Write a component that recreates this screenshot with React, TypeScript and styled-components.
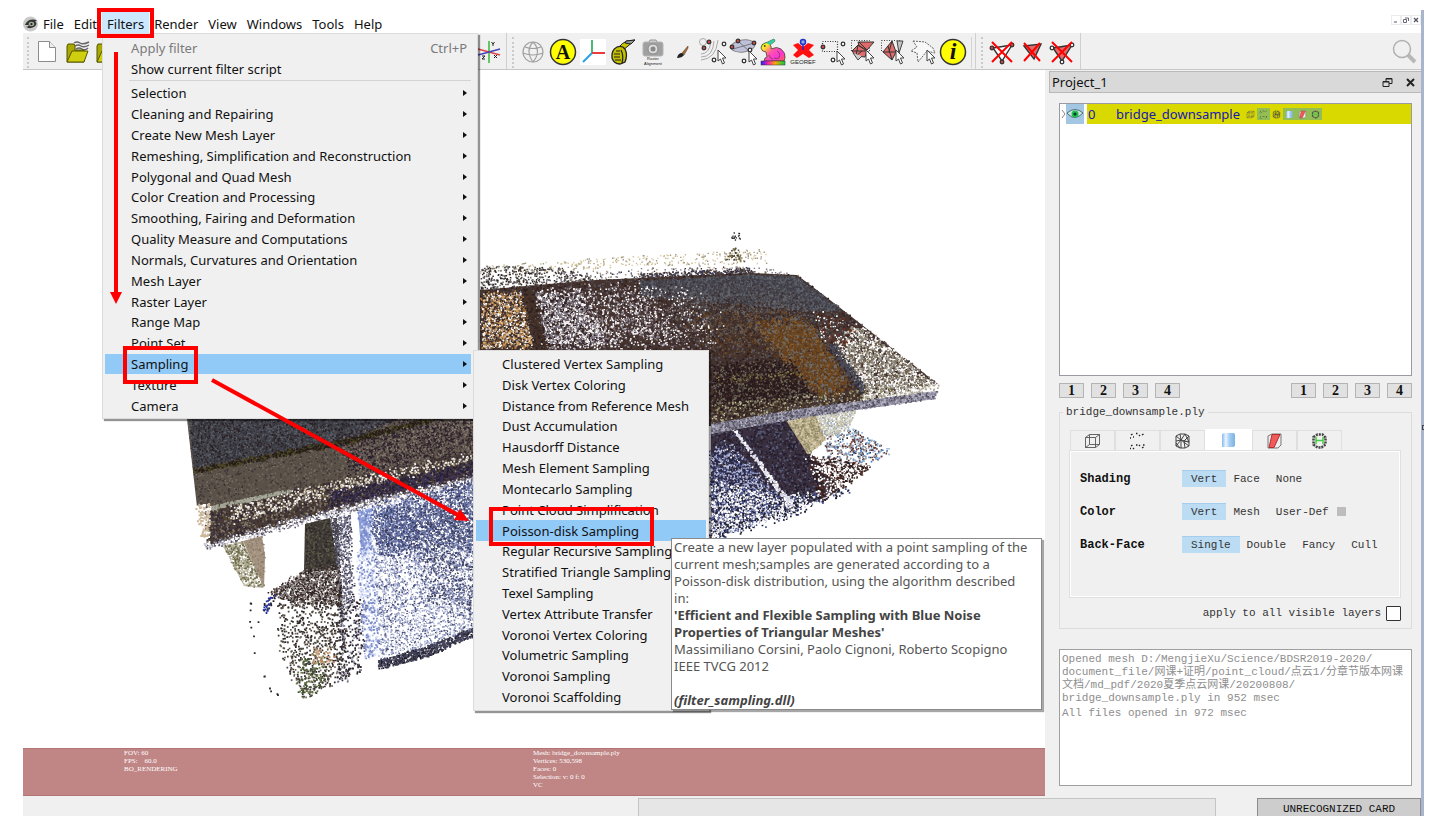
import React from "react";
import styled, { createGlobalStyle, css } from "styled-components";

const UI = `"Noto Sans", "Open Sans", "Noto Sans CJK SC", sans-serif`;
const MONO = `"Liberation Mono", "Noto Sans CJK SC", monospace`;

const Global = createGlobalStyle`
  *, *::before, *::after { box-sizing: border-box; }
  body { margin: 0; background: #fff; font-family: ${UI}; color: #111; }
  button { font: inherit; color: inherit; border: 0; background: none; padding: 0; margin: 0; text-align: left; }
  ul { list-style: none; margin: 0; padding: 0; }
  svg { display: block; }
`;

/* ---------- frame ---------- */

const Page = styled.div`
  height: 100vh;
  min-height: 640px;
  padding: 10px 23px 11px;
`;

const Frame = styled.div`
  position: relative;
  height: 100%;
  display: flex;
  flex-direction: column;
  border-right: 3px solid #a9b5cc;
`;

const MenuBar = styled.nav`
  flex: none;
  height: 23px;
  display: flex;
  align-items: stretch;
  font-size: 13px;
  line-height: 18px;
`;

const AppMark = styled.div`
  width: 15px;
  display: flex;
  align-items: center;
  padding-top: 4px;
`;

const MenuEntry = styled.div`
  position: relative;
  display: flex;
`;

const MenuTitle = styled.button<{ $open?: boolean }>`
  padding: 4px 5px 0 5px;
  font-size: 13px;
  white-space: nowrap;
  background: ${(p) => (p.$open ? "#cce8ff" : "transparent")};
`;

const WindowButtons = styled.div`
  margin-left: auto;
  padding-top: 5px;
  display: flex;
  align-items: flex-start;
`;

const WindowButton = styled.button`
  width: 10px;
  height: 10px;
  border: 1px solid #ececec;
  display: grid;
  place-items: center;
`;

/* ---------- menus ---------- */

const Panel = styled.div`
  position: absolute;
  z-index: 5;
  background: #f0f0f0;
  border: 1px solid #dcdcdc;
  box-shadow: 2px 2px 1px rgba(0, 0, 0, 0.42);
`;

const Dropdown = styled(Panel)`
  top: 100%;
  left: 0;
  width: 376px;
  padding: 3px 6px 2px 2px;
`;

const Submenu = styled(Panel)`
  top: -4px;
  left: calc(100% + 2px);
  width: 236px;
  padding: 3px 2px 2px 2px;
`;

const ItemList = styled.ul<{ $height: number }>`
  height: ${(p) => p.$height}px;
  display: grid;
  grid-auto-rows: 1fr;
`;

const Item = styled.li<{ $active?: boolean }>`
  position: relative;
  display: flex;
  background: ${(p) => (p.$active ? "#91c9f7" : "transparent")};
`;

const ItemButton = styled.button<{ $muted?: boolean }>`
  flex: 1;
  display: flex;
  align-items: center;
  justify-content: space-between;
  padding: 0 4px 0 26px;
  font-size: 13px;
  line-height: 18px;
  white-space: nowrap;
  color: ${(p) => (p.$muted ? "#7a7a7a" : "#111")};
`;

const Rule = styled.hr`
  border: 0;
  height: 1px;
  margin: 1px 0 2px 24px;
  background: #d4d4d4;
`;

const Tip = styled.div`
  position: absolute;
  z-index: 6;
  top: 18px;
  left: 195px;
  width: 371px;
  padding: 0 2px;
  background: #fff;
  border: 1px solid #8a8a8a;
  box-shadow: 2px 2px 1px rgba(0, 0, 0, 0.35);
  font-size: 13px;
  line-height: 17px;
  color: #555;
  white-space: nowrap;
  p { margin: 0; }
  b { color: #444; }
  footer { margin-top: 17px; font-weight: 700; font-style: italic; color: #444; }
`;

/* ---------- toolbar ---------- */

const Toolbar = styled.div`
  flex: none;
  height: 37px;
  display: flex;
  align-items: stretch;
  background: #f0f0f0;
  border-bottom: 1px solid #c6c6c6;
`;

const ToolGroup = styled.div<{ $wide?: boolean }>`
  display: flex;
  align-items: center;
  padding: 2px 3px 0 5px;
  border-right: 1px solid #cfcfcf;
  ${(p) => p.$wide && css`width: 484px; padding-left: 4px; padding-right: 1px;`}
`;

const Grip = styled.span`
  width: 3px;
  height: 31px;
  margin-right: 3px;
  border-left: 2px dotted #cacaca;
`;

const ToolButton = styled.button<{ $last?: boolean }>`
  width: 30px;
  height: 32px;
  display: grid;
  place-items: center;
  ${(p) => p.$last && css`margin-left: auto;`}
`;

const ToolEnd = styled.span`
  width: 1px;
  height: 31px;
  margin-left: 3px;
  background: #d4d4d4;
`;

const SearchButton = styled(ToolButton)`
  align-self: center;
  margin-left: auto;
  margin-right: 2px;
`;

/* ---------- body ---------- */

const Body = styled.div`
  flex: 1;
  min-height: 0;
  display: flex;
`;

const Viewport = styled.main`
  flex: 1;
  min-width: 0;
  display: flex;
  flex-direction: column;
`;

const Scene = styled.div`
  flex: 1;
  min-height: 0;
  svg { width: 100%; height: 100%; }
`;

const Hud = styled.div`
  flex: none;
  height: 48px;
  display: grid;
  grid-template-columns: 409fr 512fr;
  padding: 0 0 0 101px;
  background: #c08585;
  border-top: 1px solid #b37474;
  border-bottom: 1px solid #b37474;
  color: #fff;
  font: 7px/8px "Liberation Serif", serif;
  white-space: pre;
`;

const Stats = styled.pre`
  margin: 0;
  font: inherit;
`;

const StatusBar = styled.footer`
  flex: none;
  height: 20px;
  display: flex;
  justify-content: flex-end;
  background: #f0f0f0;
  padding-top: 2px;
`;

const ProgressTrack = styled.div`
  width: 578px;
  background: #e6e6e6;
  border: 1px solid #c4c4c4;
  border-bottom: 0;
  margin-right: 41px;
`;

const CardButton = styled.button`
  width: 164px;
  text-align: center;
  font: 11px/20px ${MONO};
  background: #cdcdcd;
  border: 1px solid #8c8c8c;
  border-bottom: 0;
  overflow: hidden;
`;

/* ---------- side panel ---------- */

const Side = styled.aside`
  flex: none;
  width: 376px;
  display: flex;
  flex-direction: column;
  background: #f0f0f0;
  padding: 1px 0 10px 4px;
`;

const SideTitle = styled.header`
  flex: none;
  height: 22px;
  display: flex;
  align-items: center;
  padding: 0 5px 0 2px;
  background: #d9d9d9;
  border: 1px solid #b9b9b9;
  border-right: 0;
  font-size: 13px;
  line-height: 18px;
`;

const TitleButtons = styled.div`
  margin-left: auto;
  display: flex;
  gap: 12px;
`;

const SideBody = styled.div`
  flex: 1;
  min-height: 0;
  display: flex;
  flex-direction: column;
  padding: 10px 9px 0 10px;
  font: 11px/16px ${MONO};
`;

const Tree = styled.div`
  flex: 1;
  background: #fff;
  border: 1px solid #9a9aa2;
`;

const TreeRow = styled.div`
  height: 20px;
  display: flex;
  align-items: stretch;
  font: 13px/20px ${UI};
  color: #1616b4;
`;

const Expand = styled.button`
  width: 6px;
  display: grid;
  place-items: center;
`;

const Eye = styled.button`
  width: 18px;
  display: grid;
  place-items: center;
  background: #a3c6e2;
`;

const RowLabel = styled.div`
  flex: 1;
  display: flex;
  align-items: center;
  margin-left: 3px;
  padding-left: 1px;
  background: #d9d900;
`;

const LayerId = styled.span`
  width: 28px;
`;

const Chips = styled.div`
  display: flex;
  margin-left: 4px;
`;

const Chip = styled.span<{ $on?: boolean }>`
  width: 13px;
  height: 12px;
  display: grid;
  place-items: center;
  background: ${(p) => (p.$on ? "#93bd55" : "transparent")};
`;

const SlotRow = styled.div`
  flex: none;
  display: flex;
  justify-content: space-between;
  margin-top: 7px;
`;

const Slots = styled.div`
  display: flex;
  gap: 7px;
`;

const Slot = styled.button`
  width: 25px;
  height: 15px;
  text-align: center;
  font: bold 14px/14px "Liberation Serif", serif;
  background: #e1e1e1;
  border: 1px solid #b4b4b4;
`;

const Group = styled.fieldset`
  flex: none;
  height: 225px;
  margin: 6px 0 0;
  padding: 9px 10px 7px 9px;
  border: 1px solid #dcdcdc;
  min-width: 0;
  legend { padding: 0 3px; margin-left: -6px; color: #333; }
`;

const Tabs = styled.div`
  display: flex;
  align-items: flex-end;
  padding-left: 1px;
`;

const Tab = styled.button<{ $on?: boolean }>`
  width: ${(p) => (p.$on ? 47 : 45)}px;
  height: ${(p) => (p.$on ? 21 : 20)}px;
  display: grid;
  place-items: center;
  background: ${(p) => (p.$on ? "#fff" : "transparent")};
  border: 1px solid ${(p) => (p.$on ? "#fff" : "#dfdfdf")};
  border-bottom: 0;
`;

const TabPane = styled.div`
  height: 148px;
  padding: 18px 0 0 9px;
  border: 2px solid #fff;
  outline: 1px solid #e0e0e0;
  outline-offset: -1px;
`;

const OptionRow = styled.div`
  display: flex;
  align-items: center;
  height: 17px;
  margin-bottom: 16px;
`;

const OptionName = styled.span`
  width: 102px;
  font: bold 12px/16px ${MONO};
`;

const Option = styled.button<{ $on?: boolean }>`
  height: 17px;
  padding: 0 ${(p) => (p.$on ? 9 : 8)}px;
  color: #333;
  background: ${(p) => (p.$on ? "#bcdcf4" : "transparent")};
  ${(p) => p.$on && css`margin-right: -1px; box-shadow: inset 0 1px #a4cdee;`}
`;

const Swatch = styled.span`
  width: 9px;
  height: 9px;
  background: #bdbdbd;
`;

const ApplyAll = styled.label`
  display: flex;
  align-items: center;
  justify-content: flex-end;
  gap: 5px;
  margin-top: 7px;
  height: 16px;
  color: #333;
  input {
    appearance: none;
    width: 15px;
    height: 15px;
    margin: 0;
    border: 1px solid #333;
    border-radius: 1px;
    background: #fff;
  }
`;

const Log = styled.div`
  flex: none;
  height: 137px;
  margin-top: 20px;
  padding: 3px 2px;
  background: #fff;
  border: 1px solid #a0a0a0;
  font: 11px/13px ${MONO};
  color: #8e8e8e;
  white-space: nowrap;
  overflow: hidden;
  p { margin: 0 0 2px; }
`;

const Marks = styled.svg`
  position: absolute;
  z-index: 9;
  top: -10px;
  left: 0;
  pointer-events: none;
`;

const ResizeMark = styled.span`
  position: absolute;
  right: -3px;
  top: 415px;
  width: 2px;
  height: 5px;
  border: 1px solid #444;
  border-right: 0;
`;

/* ---------- point cloud ---------- */

type Pt = [number, number];
type Patch = { area: Pt[]; count: number; size: number; colors: string[]; base?: string; soft?: number };

function makeRandom(seed: number) {
  let s = seed;
  return () => {
    s = (s * 1664525 + 1013904223) >>> 0;
    return s / 4294967296;
  };
}

function inside(x: number, y: number, poly: Pt[]) {
  let hit = false;
  for (let i = 0, j = poly.length - 1; i < poly.length; j = i++) {
    const [xi, yi] = poly[i];
    const [xj, yj] = poly[j];
    if (yi > y !== yj > y && x < ((xj - xi) * (y - yi)) / (yj - yi) + xi) hit = !hit;
  }
  return hit;
}

function scatter(patch: Patch, seed: number) {
  const rnd = makeRandom(seed);
  const xs = patch.area.map((p) => p[0]);
  const ys = patch.area.map((p) => p[1]);
  const x0 = Math.min(...xs);
  const y0 = Math.min(...ys);
  const w = Math.max(...xs) - x0;
  const h = Math.max(...ys) - y0;
  const soft = patch.soft ?? 0;
  const out = patch.colors.map(() => "");
  let placed = 0;
  for (let tries = 0; placed < patch.count && tries < patch.count * 12; tries++) {
    const x = x0 + rnd() * w;
    const y = y0 + rnd() * h;
    if (!inside(x, y, patch.area)) continue;
    const c = Math.floor(rnd() * out.length);
    const dx = (rnd() + rnd() - 1) * soft;
    const dy = (rnd() + rnd() - 1) * soft;
    out[c] += `M${(x + dx).toFixed(1)} ${(y + dy).toFixed(1)}h${patch.size}`;
    placed++;
  }
  return out;
}

const patches: Patch[] = [
  // far railing
  { area: [[480, 266], [600, 258], [766, 249], [766, 264], [640, 266], [480, 276]], count: 330, size: 1.4, colors: ["#d9cfae", "#c9b98c", "#a39a88"] },
  { area: [[480, 266], [560, 268], [600, 280], [480, 292]], count: 420, size: 1.5, colors: ["#4b4038", "#6d6a70", "#2d2624"] },
  { area: [[560, 272], [700, 266], [766, 268], [800, 276], [560, 282]], count: 240, size: 1.4, colors: ["#3b3440", "#7d7886", "#a89a84"] },
  { area: [[733, 230], [740, 234], [741, 240], [729, 240]], count: 16, size: 1.3, colors: ["#222"] },
  { area: [[734, 247], [739, 250], [744, 262], [724, 260]], count: 46, size: 1.5, colors: ["#222", "#5b543c", "#8a7a44"] },
  { area: [[640, 274], [750, 268], [756, 276], [645, 284]], count: 420, size: 1.6, colors: ["#2f2430", "#4d3b2c", "#3d3d52"] },
  // deck, upper right
  {
    area: [[480, 290], [596, 280], [750, 273], [797, 275], [830, 300], [938, 384], [862, 402], [711, 426], [480, 426]],
    base: "#44332f", count: 9000, size: 1.5,
    colors: ["#33211f", "#42302f", "#54525a", "#2a1a18", "#62606a", "#4c382a"],
  },
  { area: [[640, 281], [750, 275], [796, 277], [842, 311], [800, 310], [700, 300], [640, 296]], soft: 2, base: "#46454c", count: 2600, size: 1.6, colors: ["#565962", "#4a4a52", "#5e626c", "#3f3a42"] },
  { area: [[660, 290], [780, 296], [850, 330], [690, 330]], count: 1700, size: 1.5, soft: 16, colors: ["#5c5a5e", "#4a4648", "#6a6a6e", "#3a2e2e"] },
  { area: [[680, 315], [790, 312], [830, 350], [720, 350]], count: 1400, size: 1.5, soft: 14, colors: ["#6a6258", "#503420", "#6b4724", "#3a2a28"] },
  { area: [[755, 325], [805, 322], [850, 385], [820, 396]], count: 2600, size: 1.7, soft: 9, colors: ["#7d501f", "#8f5f28", "#59381c", "#6d6a66", "#6b431c"] },
  { area: [[715, 366], [790, 362], [812, 398], [715, 416]], count: 2300, size: 1.6, soft: 7, colors: ["#1f1314", "#2b1b1c", "#291c22", "#6d6655", "#2b1b1c"] },
  { area: [[482, 294], [520, 292], [532, 348], [482, 348]], count: 1500, size: 1.6, soft: 3, colors: ["#b77c35", "#fff", "#f5ece0", "#fff", "#8b6a4a", "#d39a52", "#3a2c2a"] },
  { area: [[536, 292], [580, 290], [610, 345], [545, 348]], count: 1500, size: 1.7, soft: 6, colors: ["#fff", "#fff", "#efeaf0", "#2f2226", "#7a7480"] },
  { area: [[570, 290], [640, 288], [680, 345], [600, 345]], count: 1000, size: 1.6, soft: 14, colors: ["#fff", "#e9e4e8", "#8a8590", "#4a3434"] },
  { area: [[630, 290], [690, 292], [720, 345], [660, 345]], count: 500, size: 1.5, soft: 18, colors: ["#fff", "#8a8590", "#3a2626"] },
  { area: [[522, 290], [530, 290], [548, 350], [536, 350]], count: 300, size: 1.7, soft: 3, colors: ["#2d211e", "#463228"] },
  { area: [[832, 345], [852, 326], [868, 332], [936, 384], [866, 396]], count: 2100, size: 1.7, soft: 3, colors: ["#fff", "#fff", "#f3efe6", "#fff", "#6d5f4a", "#8f8a80"] },
  { area: [[812, 316], [840, 318], [856, 340], [828, 350]], count: 340, size: 1.6, soft: 6, colors: ["#fff", "#6b2f1c", "#3a2622", "#4a4448"] },
  { area: [[826, 345], [834, 345], [866, 390], [858, 392]], count: 240, size: 1.7, soft: 3, colors: ["#2c2c38", "#4b4b58"] },
  { area: [[711, 404], [860, 390], [900, 386], [860, 404], [711, 427]], count: 420, size: 1.5, colors: ["#c9c4a8", "#5b532f", "#9c9678"] },
  { area: [[711, 378], [800, 372], [800, 376], [711, 382]], count: 60, size: 1.5, soft: 3, colors: ["#8c7d4c", "#5b532f"] },
  { area: [[862, 396], [938, 384], [938, 390], [862, 404]], count: 330, size: 1.7, colors: ["#fff", "#fff", "#b0aa98"] },
  // below the deck, right side
  { area: [[711, 430], [785, 418], [840, 492], [760, 520], [711, 534]], base: "#3a3040", count: 3000, size: 1.6, colors: ["#2b2228", "#3c3340", "#565a78", "#231c2c"] },
  { area: [[711, 450], [730, 444], [784, 506], [760, 520], [711, 538]], count: 2600, size: 1.6, soft: 6, colors: ["#fff", "#5a67a8", "#3a3c60", "#23254c", "#8e9ad0", "#b4b8d8", "#2b2840"] },
  { area: [[711, 480], [782, 496], [850, 490], [790, 518], [711, 540]], count: 1700, size: 1.7, soft: 3, colors: ["#fff", "#fff", "#4b5590", "#1d1d30", "#fff"] },
  { area: [[732, 430], [735, 430], [794, 506], [789, 508]], count: 300, size: 1.7, soft: 1, colors: ["#fff", "#fff", "#d9d9ea"] },
  { area: [[784, 417], [815, 413], [825, 440], [808, 455]], base: "#b9ad8a", count: 480, size: 1.5, colors: ["#cbbf9b", "#a99c78", "#d8ceb0", "#8f8666"] },
  { area: [[815, 413], [856, 409], [848, 428], [825, 440]], count: 520, size: 1.5, colors: ["#c3c8cc", "#dfe2e0", "#9aa2a8", "#cfc8a8"] },
  { area: [[824, 440], [850, 428], [886, 448], [892, 454], [858, 466], [828, 462]], count: 380, size: 1.6, soft: 2, colors: ["#3a3038", "#4c7fc0", "#8fb2d8", "#6d3a34", "#9a9a9a"] },
  { area: [[806, 455], [830, 458], [872, 466], [850, 482], [820, 500]], count: 640, size: 1.7, soft: 3, colors: ["#3b2622", "#562f28", "#2a1c1c", "#fff"] },
  { area: [[711, 424], [800, 409], [938, 391], [934, 399], [800, 418], [711, 434]], base: "#8c8a9c", count: 1100, size: 1.5, colors: ["#9b99ac", "#6f6c80", "#b9b8c8", "#55505e"] },
  // deck, lower left
  { area: [[187, 419], [479, 419], [479, 452], [207, 510], [197, 507]], base: "#5a5149", count: 2800, size: 1.4, colors: ["#655c54", "#4d443e", "#776d62", "#3b3234"] },
  { area: [[189, 419], [400, 419], [350, 440], [194, 468]], base: "#3f3f47", count: 2400, size: 1.4, soft: 2, colors: ["#4b4d57", "#33323a", "#5d6068", "#2a2022"] },
  { area: [[340, 440], [410, 419], [479, 419], [479, 455], [350, 476]], count: 2100, size: 1.6, soft: 8, colors: ["#2b1f26", "#3a2a30", "#8b7f74", "#2a2230", "#6a5f58"] },
  { area: [[192, 469], [350, 438], [420, 420], [436, 420], [350, 443], [193, 473]], count: 900, size: 1.6, soft: 2, colors: ["#33301a", "#4b4520", "#241c18"] },
  { area: [[203, 508], [330, 482], [479, 450], [479, 476], [330, 512], [207, 546]], base: "#463a38", count: 2000, size: 1.6, colors: ["#5a4a2c", "#3a2c2c", "#8d8478", "#2d2434", "#7a6f60"] },
  { area: [[230, 506], [330, 482], [479, 452], [479, 460], [330, 496], [230, 524]], count: 480, size: 1.7, soft: 3, colors: ["#fff", "#ece6da", "#cfc6b4"] },
  { area: [[207, 507], [290, 489], [291, 492], [208, 511]], count: 320, size: 1.5, colors: ["#8f9384", "#a8a998"] },
  { area: [[196, 505], [210, 504], [208, 540], [200, 536]], count: 200, size: 2, soft: 2, colors: ["#fff", "#fff", "#cdb79a"] },
  { area: [[330, 492], [479, 462], [479, 474], [330, 508]], count: 800, size: 1.6, soft: 3, colors: ["#2f2848", "#3c3560", "#271f33"] },
  { area: [[204, 544], [330, 508], [479, 474], [479, 482], [330, 517], [206, 550]], count: 1000, size: 1.6, soft: 2, colors: ["#8f8ca0", "#b8b6c6", "#57525f", "#fff"] },
  // piers and slope
  { area: [[223, 546], [243, 541], [264, 588], [244, 586]], base: "#b5b09a", count: 480, size: 1.6, soft: 2, colors: ["#8d8a6c", "#d3d0bf", "#fff", "#6f6b4d"] },
  { area: [[243, 541], [262, 536], [265, 556], [264, 588]], base: "#a3927f", count: 120, size: 1.4, colors: ["#b2a18d", "#8c7d6c"] },
  { area: [[305, 524], [330, 518], [338, 570], [304, 572]], base: "#3f3936", count: 420, size: 1.5, colors: ["#4b463c", "#2c2629", "#5a5a48"] },
  { area: [[330, 518], [338, 517], [343, 650], [336, 570]], count: 360, size: 1.6, soft: 1, colors: ["#2a2630", "#7b7a90", "#45424c"] },
  { area: [[304, 570], [338, 566], [342, 605], [300, 605], [268, 594]], count: 1100, size: 1.6, soft: 3, colors: ["#3a2824", "#4e3a34", "#2a2222", "#8b8484"] },
  { area: [[276, 600], [344, 600], [346, 680], [304, 698], [282, 660]], count: 760, size: 1.7, soft: 5, colors: ["#3a302a", "#6f665c", "#2b2326", "#4f4a40"] },
  { area: [[298, 658], [326, 655], [322, 690], [296, 700]], count: 110, size: 1.8, soft: 4, colors: ["#3f5130", "#6b7a4a"] },
  { area: [[310, 650], [330, 648], [332, 664], [314, 666]], count: 40, size: 1.8, soft: 5, colors: ["#b88a62", "#cc9f78"] },
  { area: [[340, 600], [362, 600], [362, 672], [338, 684]], count: 280, size: 1.7, soft: 4, colors: ["#3d3540", "#9d9cb4", "#2c2630"] },
  { area: [[268, 598], [276, 594], [266, 615], [260, 608]], count: 34, size: 1.8, colors: ["#2c1e1e", "#2735a0"] },
  { area: [[248, 600], [262, 620], [280, 700], [266, 692], [246, 640]], count: 14, size: 1.8, colors: ["#2c2622"] },
  { area: [[338, 517], [350, 513], [354, 600], [343, 610]], count: 560, size: 1.6, soft: 2, colors: ["#2b2836", "#8b8cae", "#fff", "#5d5c74"] },
  { area: [[358, 512], [372, 508], [370, 550], [362, 560]], base: "#8a9cd8", count: 240, size: 1.6, soft: 3, colors: ["#97a8e0", "#7688c8", "#dfe6fa"] },
  { area: [[356, 550], [374, 540], [378, 655], [364, 660]], count: 520, size: 1.7, soft: 3, colors: ["#aebbe8", "#dfe6fa", "#7787c4"] },
  { area: [[372, 508], [479, 480], [479, 630], [380, 664]], count: 5600, size: 1.6, soft: 2, colors: ["#66709c", "#8e98c4", "#484e78", "#fff", "#a8b0d4", "#fff"] },
  { area: [[374, 510], [479, 484], [479, 550], [376, 550]], count: 2600, size: 1.6, soft: 12, colors: ["#4b5488", "#353a60", "#6b79b0", "#555f90"] },
  { area: [[410, 500], [479, 484], [479, 610], [430, 600]], count: 1900, size: 1.6, soft: 12, colors: ["#fff", "#34385a", "#45486a", "#fff", "#7078a4"] },
  { area: [[377, 661], [430, 645], [479, 625], [479, 634], [430, 656], [379, 670]], count: 620, size: 1.7, soft: 1, colors: ["#1c1a24", "#2d2c3e", "#43445c"] },
];

const dots = patches.map((p, i) => scatter(p, 97 + i * 131));

const PointCloud = () => (
  <svg viewBox="23 70 1022 678" preserveAspectRatio="xMinYMin meet" role="img" aria-label="Bridge point cloud">
    {patches.map((p, i) => (
      <g key={i}>
        {p.base && <polygon points={p.area.map((a) => a.join(",")).join(" ")} fill={p.base} />}
        {dots[i].map((d, k) => (
          <path key={k} d={d} stroke={p.colors[k]} strokeWidth={p.size} fill="none" />
        ))}
      </g>
    ))}
    <path d="M353 512l4 40" stroke="#fff" strokeWidth="5" />
  </svg>
);

/* ---------- icons ---------- */

const Ico = ({ children, s = 28 }: { children: React.ReactNode; s?: number }) => (
  <svg width={s} height={s} viewBox="0 0 28 28" fill="none">{children}</svg>
);

const Cursor = ({ x = 16, y = 12 }: { x?: number; y?: number }) => (
  <path d={`M${x} ${y}v11l2.500-2 2 5 2-1-2-5h3.500z`} fill="#fff" stroke="#444" strokeWidth="1" />
);
const Ring = ({ x, y, f = "#fff" }: { x: number; y: number; f?: string }) => (
  <circle cx={x} cy={y} r="1.8" fill={f} stroke="#333" strokeWidth="1.300" />
);

const DocIcon = () => (
  <Ico><path d="M4.500 3.500h11l6 6v14h-17z" fill="#fff" stroke="#8c8c8c" /><path d="M15.500 3.500v6h6" fill="#eee" stroke="#8c8c8c" /></Ico>
);
const FolderIcon = () => (
  <Ico>
    <path d="M10 5q3-2 6 0t9-1M11 8q3-2 6 0t8-1M12 11q3-2 6 0t6-1" stroke="#666" strokeWidth="1.400" />
    <path d="M3 24V8l1-2h6l1 2v4h9v12z" fill="#a8a800" stroke="#555500" />
    <path d="M3 24l5-11h16l-4 11z" fill="#cfcf10" stroke="#555500" />
  </Ico>
);
const AxisIcon = () => (
  <Ico>
    <path d="M13 3v22" stroke="#63c763" strokeWidth="2" />
    <path d="M2 11l22 6" stroke="#d44" strokeWidth="1.500" />
    <path d="M2 17l22-6" stroke="#44b" strokeWidth="1.500" />
    <path d="M15.500 4l1.500 2 1.500-2M17 6v2M6 18h3l-3 3h3M18 17l3 3M21 17l-3 3" stroke="#222" />
  </Ico>
);
const GlobeIcon = () => (
  <Ico>
    <g stroke="#a0a0a0" strokeWidth="1.200">
      <circle cx="14" cy="14" r="10" />
      <path d="M14 4q-8 9 0 20M14 4q9 9 0 20M4 15q10 4 20 0M6 9q8 3 16 0" />
    </g>
  </Ico>
);
const LetterIcon = ({ ch, italic }: { ch: string; italic?: boolean }) => (
  <Ico>
    <circle cx="14" cy="14" r="12.500" fill="#ff0" stroke="#333" strokeWidth="1.500" />
    <text x="14" y="21" textAnchor="middle" fontFamily="Liberation Serif, serif" fontSize={italic ? 24 : 20} fontWeight="bold" fontStyle={italic ? "italic" : "normal"} fill="#111">{ch}</text>
  </Ico>
);
const TriadIcon = () => (
  <Ico>
    <rect x="1" y="1" width="26" height="26" fill="#fff" />
    <path d="M13 2v13" stroke="#4cb878" strokeWidth="2" />
    <path d="M13 15h13" stroke="#ee3a3a" strokeWidth="2" />
    <path d="M13 15l-9 9" stroke="#28a0e8" strokeWidth="2" />
  </Ico>
);
const TapeIcon = () => (
  <Ico>
    <path d="M10 9q3-4 8-6l8-1-7 6-5 4q-1-3-4-3z" fill="#c8c400" stroke="#222" />
    <path d="M17 3l9-1-4 4-6-1z" fill="#999" stroke="#222" />
    <path d="M8 9q5-2 8 2 3 6 0 13l-5 2q-6 0-8-6-1-8 5-11z" fill="#c4c000" stroke="#222" strokeWidth="1.300" />
    <path d="M7 13h4M5 16h6M5 19h6M6 22h6M12 12q3 6 1 13" stroke="#222" strokeWidth="1.200" />
  </Ico>
);
const CameraIcon = () => (
  <Ico>
    <rect x="4" y="4" width="20" height="14" rx="2" fill="#a0a0a0" stroke="#b4b4b4" />
    <path d="M10 4l1-2h6l1 2" fill="#ccc" stroke="#999" />
    <circle cx="14" cy="11" r="5" fill="#ddd" stroke="#888" />
    <circle cx="14" cy="11" r="2.500" fill="#888" />
    <text x="14" y="22" textAnchor="middle" fontFamily="Liberation Sans, sans-serif" fontSize="4" fill="#222">Raster</text>
    <text x="14" y="27" textAnchor="middle" fontFamily="Liberation Sans, sans-serif" fontSize="4" fill="#222">Alignment</text>
  </Ico>
);
const BrushIcon = () => (
  <Ico>
    <path d="M19 8l-6 7 2 2 4-7z" fill="#9a6a3c" stroke="#6b4a2c" strokeWidth=".6" />
    <path d="M13 15q-4 0-5 5 5 0 7-3z" fill="#222" />
  </Ico>
);
const PointRingsIcon = () => (
  <Ico>
    <path d="M2 16q8 0 10-12M2 19q12 0 13-16M2 22q15-1 17-20" stroke="#aaa" />
    <circle cx="4" cy="4" r="3.500" stroke="#aaa" />
    <Ring x={10} y={4} f="#d44" /><Ring x={5} y={10} f="#d44" /><Ring x={25} y={6} /><Ring x={15} y={22} />
    <Cursor x={19} y={12} />
  </Ico>
);
const EllipseIcon = () => (
  <Ico>
    <ellipse cx="14" cy="8" rx="12" ry="6" transform="rotate(-8 14 8)" fill="#bfc1da" stroke="#888" />
    <path d="M4 11L25 5M9 3l12 11" stroke="#777" />
    <Ring x={9} y={3} f="#d44" /><Ring x={25} y={5} f="#d44" /><Ring x={3} y={9} f="#d44" /><Ring x={15} y={23} /><Ring x={21} y={12} />
    <Cursor x={20} y={13} />
  </Ico>
);
const BunnyIcon = () => (
  <Ico>
    <defs>
      <linearGradient id="hue" x1="0" y1="0" x2="1" y2="1">
        <stop offset="0" stopColor="#8e3" /><stop offset=".25" stopColor="#fe2" /><stop offset=".5" stopColor="#f5a" />
        <stop offset=".75" stopColor="#f3d" /><stop offset="1" stopColor="#f63" />
      </linearGradient>
      <linearGradient id="strip"><stop offset="0" stopColor="#22f" /><stop offset=".3" stopColor="#f2a" /><stop offset=".6" stopColor="#fa0" /><stop offset="1" stopColor="#0c4" /></linearGradient>
    </defs>
    <path d="M2 10q0-4 4-5l3-1 6-3 1 2-5 4q2 2 1 4 6-3 10 0 5 4 4 9l-1 3H5l1-3 2-1-1-5q-4 0-5-4z" fill="url(#hue)" stroke="#443" strokeWidth=".8" />
    <path d="M7 5l2-1 6-3 1 2-5 4z" fill="#2cd0a0" />
    <path d="M18 13q4 2 2 7-3 1-5 0M10 17q1 4 4 4" stroke="#644" strokeWidth=".8" />
    <path d="M5 8h1.500" stroke="#222" strokeWidth="1.500" />
    <rect x="2" y="23" width="24" height="4" fill="url(#strip)" stroke="#333" strokeWidth=".5" />
  </Ico>
);
const GeorefIcon = () => (
  <Ico>
    <path d="M4 7l5-2 5 4 5-4 6 2-5 5 5 5-5 3-6-4-6 4-4-3 5-5z" fill="#f11" />
    <circle cx="14" cy="4" r="2.500" fill="#8ad" stroke="#23c" strokeWidth="1.500" />
    <path d="M14 7v5" stroke="#22c" strokeWidth="1.500" />
    <text x="14" y="26" textAnchor="middle" fontFamily="Liberation Sans, sans-serif" fontSize="6" fill="#222">GEOREF</text>
  </Ico>
);
const SelectVertIcon = () => (
  <Ico>
    <rect x="3.500" y="3.500" width="15" height="10" stroke="#333" strokeWidth="1.200" strokeDasharray="1 1.500" />
    <Ring x={4} y={9} f="#d44" /><Ring x={24} y={6} /><Ring x={14} y={22} />
    <Cursor x={18} y={13} />
  </Ico>
);
const SelectFaceIcon = ({ alt }: { alt?: boolean }) => (
  <Ico>
    <rect x="2.500" y="2.500" width="18" height="11" stroke="#444" strokeDasharray="1 1.500" />
    {alt ? (
      <>
        <path d="M4 14l9-11 4 11-4 8z" fill="#df6b6b" stroke="#333" />
        <path d="M4 14l13 0M9 8l4 14M13 3l-3 11" stroke="#333" />
        <path d="M18 3h6l-4 12z" fill="#c4c4c4" stroke="#444" />
      </>
    ) : (
      <>
        <path d="M9 4h16l-7 8-8-4zM3 13l6-6 9 6-2 6-9-1z" fill="#df6b6b" stroke="#333" />
        <path d="M3 13l15 0M9 7l-2 11 6-5M10 4l8 8" stroke="#333" />
        <path d="M4 15l5 7 4-4" fill="#ccc" stroke="#444" />
      </>
    )}
    <Cursor x={17} y={12} />
  </Ico>
);
const SelectPolyIcon = () => (
  <Ico>
    <path d="M4 3l12 1 8 6 2 5-8-2-9 11-1-9-6-2 6-4z" stroke="#666" strokeDasharray="2 1" fill="#f8f8f8" />
    <Cursor x={18} y={12} />
  </Ico>
);
const DeleteIcon = ({ fill, rings, small }: { fill: string; rings?: boolean; small?: boolean }) => (
  <Ico>
    <path d={small ? "M6 8L23 6 16 21z" : "M5 10L24 7 14 23z"} fill={fill} stroke="#333" strokeWidth="1.400" />
    {rings && <><Ring x={4} y={10} f={fill === "#fff" ? "#d44" : "#fff"} /><Ring x={24} y={7} f={fill === "#fff" ? "#d44" : "#fff"} /><Ring x={14} y={24} f={fill === "#fff" ? "#d44" : "#fff"} /></>}
    <path d={small ? "M6 5l16 18M22 5L6 23" : "M4 4l20 20M24 4L4 24"} stroke="#f00" strokeWidth="2" />
  </Ico>
);
const SearchIcon = () => (
  <Ico>
    <circle cx="12" cy="12" r="8.500" stroke="#b0b0b0" strokeWidth="1.500" />
    <path d="M18 18l7 7" stroke="#b8b8b8" strokeWidth="4" />
  </Ico>
);

const BoxGlyph = () => <path d="M1.500 5.500h10v10h-10zM5.500 2.500h10v10h-10zM1.500 5.500l4-3M11.500 5.500l4-3M11.500 15.500l4-3M1.500 15.500l4-3" stroke="#555" strokeWidth=".9" />;
const DotsGlyph = () => <path d="M2 3l1.500-1M7 1.500h1.500M13 3l1.500-1M4 5h1M10 3l1 1M1 6h1M2 14l1.500-1M7 13h1.500M13 16l1.500-1M4 16l1 1M10 13l1 1M14 13h1.500M1 16.500h1" stroke="#222" strokeWidth="1.400" />;
const WireGlyph = () => <path d="M2 4l4-2h5l4 2v10l-4 2H6l-4-2zM2 4l5 4 4-6M2 14l5-6v8M15 4l-5 5 1 7M7 8l8 6M2 9l5-1 8 2M6 2l1 6M2 11l4 5M11 2l4 8-5-1" stroke="#444" strokeWidth="1" />;
const SolidGlyph = () => (
  <>
    <defs>
      <linearGradient id="drum"><stop offset="0" stopColor="#86b8ec" /><stop offset=".3" stopColor="#eef6ff" /><stop offset=".55" stopColor="#a8d0f4" /><stop offset="1" stopColor="#7ab0e6" /></linearGradient>
    </defs>
    <path d="M2 4q0-2 3-2h8q2 0 2 2v10q0 2-3 2H2z" fill="url(#drum)" />
  </>
);
const BackGlyph = () => (
  <>
    <path d="M2 4l4-2h9v11l-3 3H2z" fill="#eee" stroke="#777" />
    <path d="M6 2.500h8L8 15.500H3z" fill="#f05a5a" stroke="#b03030" />
  </>
);
const EdgeGlyph = () => (
  <>
    <path d="M2.500 5l4-2.500h5l3 3v7l-4 3h-4l-4-3z" stroke="#444" strokeWidth="2.500" strokeDasharray="2 1" />
    <path d="M5 5v7M5 8.500h7M12 5v7" stroke="#4c4" strokeWidth="1.500" />
  </>
);
const glyphs = [BoxGlyph, DotsGlyph, WireGlyph, SolidGlyph, BackGlyph, EdgeGlyph];
const glyphNames = ["Bounding box", "Points", "Wireframe", "Solid", "Selection", "Edges"];

/* ---------- data ---------- */

const filterItems = [
  "Selection", "Cleaning and Repairing", "Create New Mesh Layer", "Remeshing, Simplification and Reconstruction",
  "Polygonal and Quad Mesh", "Color Creation and Processing", "Smoothing, Fairing and Deformation",
  "Quality Measure and Computations", "Normals, Curvatures and Orientation", "Mesh Layer", "Raster Layer",
  "Range Map", "Point Set", "Sampling", "Texture", "Camera",
];
const samplingItems = [
  "Clustered Vertex Sampling", "Disk Vertex Coloring", "Distance from Reference Mesh", "Dust Accumulation",
  "Hausdorff Distance", "Mesh Element Sampling", "Montecarlo Sampling", "Point Cloud Simplification",
  "Poisson-disk Sampling", "Regular Recursive Sampling", "Stratified Triangle Sampling", "Texel Sampling",
  "Vertex Attribute Transfer", "Voronoi Vertex Coloring", "Volumetric Sampling", "Voronoi Sampling", "Voronoi Scaffolding",
];
const options = [
  { name: "Shading", values: ["Vert", "Face", "None"] },
  { name: "Color", values: ["Vert", "Mesh", "User-Def"], swatch: true },
  { name: "Back-Face", values: ["Single", "Double", "Fancy", "Cull"] },
];
const tools: [string, React.ReactNode][] = [
  ["Trackball", <GlobeIcon />], ["Annotations", <LetterIcon ch="A" />], ["Axes", <TriadIcon />], ["Measure", <TapeIcon />],
  ["Raster alignment", <CameraIcon />], ["Paint", <BrushIcon />], ["Point rings", <PointRingsIcon />],
  ["Fit plane", <EllipseIcon />], ["Quality map", <BunnyIcon />], ["Georeference", <GeorefIcon />],
  ["Select vertices", <SelectVertIcon />], ["Select faces", <SelectFaceIcon />], ["Select connected", <SelectFaceIcon alt />],
  ["Select polygon", <SelectPolyIcon />], ["Info", <LetterIcon ch="i" italic />],
];

const SamplingMenu = () => (
  <Submenu>
    <ItemList $height={354}>
      {samplingItems.map((label) => {
        const active = label === "Poisson-disk Sampling";
        return (
          <Item key={label} $active={active}>
            <ItemButton>{label}</ItemButton>
            {active && (
              <Tip role="tooltip">
                <p>Create a new layer populated with a point sampling of the<br />current mesh;samples are generated according to a<br />Poisson-disk distribution, using the algorithm described<br />in:</p>
                <p><b>'Efficient and Flexible Sampling with Blue Noise<br />Properties of Triangular Meshes'</b></p>
                <p>Massimiliano Corsini, Paolo Cignoni, Roberto Scopigno<br />IEEE TVCG 2012</p>
                <footer>(filter_sampling.dll)</footer>
              </Tip>
            )}
          </Item>
        );
      })}
    </ItemList>
  </Submenu>
);

const FiltersMenu = () => (
  <Dropdown>
    <ItemList $height={42}>
      <Item><ItemButton $muted><span>Apply filter</span><span>Ctrl+P</span></ItemButton></Item>
      <Item><ItemButton>Show current filter script</ItemButton></Item>
    </ItemList>
    <Rule />
    <ItemList $height={333}>
      {filterItems.map((label) => (
        <Item key={label} $active={label === "Sampling"}>
          <ItemButton>
            <span>{label}</span>
            <svg width="4" height="6" viewBox="0 0 4 6"><path d="M0 0l4 3-4 3z" fill="#111" /></svg>
          </ItemButton>
          {label === "Sampling" && <SamplingMenu />}
        </Item>
      ))}
    </ItemList>
  </Dropdown>
);

export default function App() {
  return (
    <Page>
      <Global />
      <Frame>
        <MenuBar>
          <AppMark>
            <svg width="16" height="16" viewBox="0 0 16 16">
              <circle cx="8" cy="8" r="8" fill="#c9c9c9" />
              <path d="M2 9q4-8 13-5l-2 1q3 3-1 6-5 3-9 0 3 0 3-2z" fill="#333" />
              <ellipse cx="9" cy="8" rx="3" ry="2.300" fill="#a0b09a" />
              <circle cx="9" cy="8" r="1.200" fill="#222" />
            </svg>
          </AppMark>
          {["File", "Edit", "Filters", "Render", "View", "Windows", "Tools", "Help"].map((t) => (
            <MenuEntry key={t}>
              <MenuTitle $open={t === "Filters"}>{t}</MenuTitle>
              {t === "Filters" && <FiltersMenu />}
            </MenuEntry>
          ))}
          <WindowButtons>
            <WindowButton aria-label="Minimize"><svg width="6" height="6"><path d="M1 5h3" stroke="#556" /></svg></WindowButton>
            <WindowButton aria-label="Restore"><svg width="6" height="6" fill="none"><path d="M.5 2.500h3v3h-3zM2 1h3.500v3" stroke="#667" /></svg></WindowButton>
            <WindowButton aria-label="Close"><svg width="6" height="6"><path d="M1 1l4 4M5 1L1 5" stroke="#556" strokeWidth="1.300" /></svg></WindowButton>
          </WindowButtons>
        </MenuBar>

        <Toolbar>
          <ToolGroup $wide>
            <Grip />
            <ToolButton aria-label="New"><DocIcon /></ToolButton>
            <ToolButton aria-label="Open project"><FolderIcon /></ToolButton>
            <ToolButton aria-label="Import mesh"><FolderIcon /></ToolButton>
            <ToolButton aria-label="Show axis" $last><AxisIcon /></ToolButton>
          </ToolGroup>
          <ToolGroup>
            <Grip />
            {tools.map(([name, icon]) => <ToolButton key={name} aria-label={name}>{icon}</ToolButton>)}
            <ToolEnd />
          </ToolGroup>
          <ToolGroup>
            <Grip />
            <ToolButton aria-label="Delete vertices"><DeleteIcon fill="#fff" rings /></ToolButton>
            <ToolButton aria-label="Delete faces"><DeleteIcon fill="#e06c6c" small /></ToolButton>
            <ToolButton aria-label="Delete both"><DeleteIcon fill="#e06c6c" rings /></ToolButton>
          </ToolGroup>
          <SearchButton aria-label="Search"><SearchIcon /></SearchButton>
        </Toolbar>

        <Body>
          <Viewport>
            <Scene><PointCloud /></Scene>
            <Hud>
              <Stats>{"FOV: 60\nFPS:    60.0\nBO_RENDERING"}</Stats>
              <Stats>{"Mesh: bridge_downsample.ply\nVertices: 530,598\nFaces: 0\nSelection: v: 0 f: 0\nVC"}</Stats>
            </Hud>
          </Viewport>

          <Side>
            <SideTitle>
              Project_1
              <TitleButtons>
                <button aria-label="Float"><svg width="11" height="11" fill="none"><path d="M1 4.500h6v5H1zM4 4V1.500h6v5H7M1 5h6M4 2h6" stroke="#222" /></svg></button>
                <button aria-label="Close"><svg width="11" height="11"><path d="M2 2l7 7M9 2L2 9" stroke="#222" strokeWidth="2" /></svg></button>
              </TitleButtons>
            </SideTitle>
            <SideBody>
              <Tree>
                <TreeRow>
                  <Expand aria-label="Expand"><svg width="5" height="8" fill="none"><path d="M1 0l3 4-3 4" stroke="#888" /></svg></Expand>
                  <Eye aria-label="Toggle visibility">
                    <svg width="16" height="12" viewBox="0 0 16 12"><path d="M0 5q8-7 16 0-8 8-14 2z" fill="#cfe6e0" stroke="#356" strokeWidth=".8" /><circle cx="8" cy="6" r="3.500" fill="#1fc04a" /><circle cx="8" cy="6" r="1.500" fill="#033" /></svg>
                  </Eye>
                  <RowLabel>
                    <LayerId>0</LayerId>bridge_downsample
                    <Chips>
                      {glyphs.map((G, i) => (
                        <Chip key={i} $on={i === 1 || i > 2}><svg width="9" height="9" viewBox="0 0 17 18" fill="none"><G /></svg></Chip>
                      ))}
                    </Chips>
                  </RowLabel>
                </TreeRow>
              </Tree>
              <SlotRow>
                <Slots>{[1, 2, 3, 4].map((n) => <Slot key={n}>{n}</Slot>)}</Slots>
                <Slots>{[1, 2, 3, 4].map((n) => <Slot key={n}>{n}</Slot>)}</Slots>
              </SlotRow>
              <Group>
                <legend>bridge_downsample.ply</legend>
                <Tabs role="tablist">
                  {glyphs.map((G, i) => (
                    <Tab key={i} role="tab" $on={i === 3} aria-selected={i === 3} aria-label={glyphNames[i]}>
                      <svg width="17" height="18" viewBox="0 0 17 18" fill="none"><G /></svg>
                    </Tab>
                  ))}
                </Tabs>
                <TabPane role="tabpanel">
                  {options.map((o) => (
                    <OptionRow key={o.name}>
                      <OptionName>{o.name}</OptionName>
                      {o.values.map((v, i) => <Option key={v} $on={i === 0}>{v}</Option>)}
                      {o.swatch && <Swatch />}
                    </OptionRow>
                  ))}
                </TabPane>
                <ApplyAll>apply to all visible layers<input type="checkbox" /></ApplyAll>
              </Group>
              <Log role="log">
                <p>Opened mesh D:/MengjieXu/Science/BDSR2019-2020/<br />document_file/网课+证明/point_cloud/点云1/分章节版本网课<br />文档/md_pdf/2020夏季点云网课/20200808/<br />bridge_downsample.ply in 952 msec</p>
                <p>All files opened in 972 msec</p>
              </Log>
            </SideBody>
          </Side>
        </Body>

        <StatusBar>
          <ProgressTrack />
          <CardButton>UNRECOGNIZED CARD</CardButton>
        </StatusBar>

        <Marks width="700" height="560" viewBox="23 0 700 560" fill="none">
          <g stroke="#f00" strokeWidth="4">
            <rect x="99" y="10" width="53" height="26" />
            <rect x="125" y="348" width="71" height="34" />
            <rect x="491" y="509" width="161" height="35" />
            <path d="M116 52v242M212 380l248 136" />
          </g>
          <path d="M110 292h12l-6 12zM460 509l9 12-15-1z" fill="#f00" />
        </Marks>
        <ResizeMark />
      </Frame>
    </Page>
  );
}
